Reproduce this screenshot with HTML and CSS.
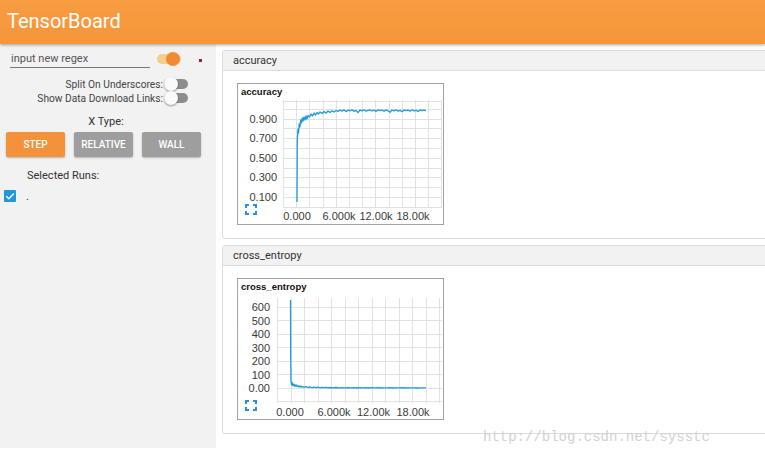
FILE: index.html
```html
<!DOCTYPE html>
<html>
<head>
<meta charset="utf-8">
<title>TensorBoard</title>
<link rel="stylesheet" href="styles.css">
</head>
<body>
<header class="topbar"><span class="brand">TensorBoard</span></header>
<div class="layout">
  <aside class="sidebar">
    <div class="regex-row">
      <div class="regex-input">input new regex</div>
      <div class="toggle on"><span class="track"></span><span class="knob"></span></div>
      <span class="dot"></span>
    </div>
    <div class="toggle-row first">
      <span class="toggle-label">Split On Underscores:</span>
      <div class="toggle off"><span class="track"></span><span class="knob"></span></div>
    </div>
    <div class="toggle-row">
      <span class="toggle-label">Show Data Download Links:</span>
      <div class="toggle off"><span class="track"></span><span class="knob"></span></div>
    </div>
    <div class="xtype">X Type:</div>
    <div class="xbuttons">
      <div class="xbtn active">STEP</div>
      <div class="xbtn">RELATIVE</div>
      <div class="xbtn">WALL</div>
    </div>
    <div class="runs-title">Selected Runs:</div>
    <div class="run-row">
      <span class="checkbox"><svg width="12" height="12" viewBox="0 0 12 12"><path d="M2.3 6.2 L4.9 8.7 L9.8 3.4" fill="none" stroke="#fff" stroke-width="1.4"/></svg></span>
      <span class="run-name">.</span>
    </div>
  </aside>
  <main class="main">
    <section class="card">
      <div class="card-head">accuracy</div>
      <div class="card-body">
        <div class="chart">
          <div class="chart-title">accuracy</div>
          <svg class="plot" width="205" height="125" viewBox="0 0 205 125">
            <g stroke="#e2e2e2" stroke-width="1" fill="none">
              <path d="M45.5 1V109 M58.5 1V109 M71.5 1V109 M85.5 1V109 M98.5 1V109 M111.5 1V109 M124.5 1V109 M137.5 1V109 M151.5 1V109 M164.5 1V109 M177.5 1V109 M190.5 1V109 M203.5 1V109"/>
              <path d="M45 108.5H204 M45 98.5H204 M45 88.5H204 M45 78.5H204 M45 69.5H204 M45 59.5H204 M45 49.5H204 M45 39.5H204 M45 29.5H204 M45 20.5H204 M45 10.5H204 M45 2.5H204"/>
            </g>
            <g class="axis" text-anchor="end">
              <text x="39" y="23.5">0.900</text>
              <text x="39" y="43">0.700</text>
              <text x="39" y="62.5">0.500</text>
              <text x="39" y="82">0.300</text>
              <text x="39" y="101.5">0.100</text>
            </g>
            <g class="axis" text-anchor="middle">
              <text x="59" y="121">0.000</text>
              <text x="101" y="121">6.000k</text>
              <text x="138" y="121">12.00k</text>
              <text x="175" y="121">18.00k</text>
            </g>
            <polyline class="series" points="59,103 59.3,40 60,30 60.6,34 61.2,25 62,28 62.7,21 63.5,24 64.2,19 65,22 66,18 67,21 68,17 69,20 70,16.5 71.5,18 73,15 74.5,17 76,14 77.5,16 79,13.5 80.5,15 82,13 84,14.5 86,12.5 88,14 90,12 92,13.5 94,11.8 96,13 98,11.5 100,12.4 102,11 104,12.2 106,10.8 108,12.6 110,11.2 112,11.8 114,10.7 116,12.3 118,11.4 120,13.6 122,11 124,11.9 126,10.7 128,12.2 130,11.3 132,10.9 134,12 136,11.1 138,12.5 140,10.8 142,11.7 144,11.1 146,12.3 148,10.9 150,11.8 152,13.2 154,11 156,11.9 158,10.8 160,12.1 162,11.3 164,12.7 166,10.9 168,11.6 170,11.1 172,12.2 174,10.8 176,11.9 178,11.3 180,12.4 182,10.9 184,11.6 186,11.2 188,11.8"/>
            <path class="fit" d="M8 109V106H11 M15 106H18V109 M18 112V115H15 M11 115H8V112"/>
          </svg>
        </div>
      </div>
    </section>
    <section class="card">
      <div class="card-head">cross_entropy</div>
      <div class="card-body">
        <div class="chart">
          <div class="chart-title">cross_entropy</div>
          <svg class="plot" width="205" height="125" viewBox="0 0 205 125">
            <g stroke="#e2e2e2" stroke-width="1" fill="none">
              <path d="M39.5 4V109 M53.5 4V109 M66.5 4V109 M80.5 4V109 M93.5 4V109 M107.5 4V109 M120.5 4V109 M134.5 4V109 M147.5 4V109 M161.5 4V109 M174.5 4V109 M188.5 4V109 M201.5 4V109"/>
              <path d="M39 13.5H204 M39 26.5H204 M39 40.5H204 M39 53.5H204 M39 67.5H204 M39 80.5H204 M39 94.5H204 M39 107.5H204"/>
            </g>
            <g class="axis" text-anchor="end">
              <text x="32" y="17">600</text>
              <text x="32" y="31">500</text>
              <text x="32" y="44">400</text>
              <text x="32" y="58">300</text>
              <text x="32" y="71">200</text>
              <text x="32" y="85">100</text>
              <text x="32" y="98">0.00</text>
            </g>
            <g class="axis" text-anchor="middle">
              <text x="52" y="122">0.000</text>
              <text x="96" y="122">6.000k</text>
              <text x="135.5" y="122">12.00k</text>
              <text x="175" y="122">18.00k</text>
            </g>
            <polyline class="series" points="52.5,6 52.7,60 53,87 53.5,91 54,88.5 55,91.8 56,90 57,92.4 58,90.8 59,92.6 60,91.6 61,93 62,92 63,93.1 64,92.4 66,93.3 68,92.7 70,93.5 72,93 74,93.6 76,93.1 78,93.7 80,93.2 82,93.8 84,93.3 86,93.7 88,93.4 90,93.9 92,93.5 95,93.8 98,93.5 101,93.9 104,93.6 107,93.9 110,93.6 113,93.9 116,93.7 119,94 122,93.6 125,93.9 128,93.7 131,94 134,93.7 137,93.9 140,93.7 143,94 146,93.8 149,93.9 152,93.7 155,94 158,93.8 161,93.9 164,93.7 167,94 170,93.8 173,93.9 176,93.8 179,94 182,93.8 185,93.9 188,93.8"/>
            <path class="fit" d="M8 110V107H11 M15 107H18V110 M18 113V116H15 M11 116H8V113"/>
          </svg>
        </div>
      </div>
    </section>
  </main>
</div>
<div class="watermark">http://blog.csdn.net/sysstc</div>
</body>
</html>
```

FILE: styles.css
```css
* {
  box-sizing: border-box;
}

body {
  margin: 0;
  background: #fff;
  font-family: Roboto, "Liberation Sans", sans-serif;
  color: #333;
  overflow: hidden;
}

.topbar {
  height: 44px;
  background: linear-gradient(#f89d42, #f6953a);
  display: flex;
  align-items: center;
  padding: 0 0 2px 7px;
  box-shadow: 0 1px 3px rgba(0, 0, 0, 0.35);
  position: relative;
  z-index: 1;
}

.brand {
  color: #fff;
  font-size: 20px;
}

.layout {
  display: flex;
  height: 404px;
}

.sidebar {
  width: 216px;
  flex: none;
  background: #f2f2f2;
  display: flex;
  flex-direction: column;
}

.regex-row {
  display: flex;
  align-items: center;
  height: 18px;
  margin-top: 6px;
  padding-left: 10px;
}

.regex-input {
  width: 140px;
  height: 17px;
  border-bottom: 1px solid #777;
  font-size: 11px;
  line-height: 16px;
  color: #555;
  padding-left: 1px;
}

.toggle {
  position: relative;
  width: 24px;
  height: 14px;
  flex: none;
}

.track {
  display: block;
  margin-top: 2px;
  height: 10px;
  border-radius: 5px;
}

.knob {
  position: absolute;
  top: 0;
  width: 14px;
  height: 14px;
  border-radius: 50%;
}

.regex-row .toggle {
  margin-left: 7px;
}

.toggle.on .track {
  background: #f5cd8c;
}

.toggle.on .knob {
  right: 1px;
  background: #f28a35;
}

.toggle.off .track {
  background: #8d8d8d;
}

.toggle.off .knob {
  left: 0;
  background: #fafafa;
  box-shadow: 0 1px 2px rgba(0, 0, 0, 0.4);
}

.dot {
  width: 3px;
  height: 3px;
  margin-left: 18px;
  margin-top: 3px;
  background: #9c1c3c;
}

.toggle-row {
  display: flex;
  justify-content: flex-end;
  align-items: center;
  height: 14px;
  padding-right: 28px;
  font-size: 10.2px;
  color: #444;
}

.toggle-row.first {
  margin-top: 9px;
}

.toggle-label {
  margin-right: 1px;
}

.xtype {
  margin-top: 10px;
  height: 14px;
  line-height: 14px;
  text-align: center;
  padding-right: 4px;
  font-size: 11px;
  color: #333;
}

.xbuttons {
  display: flex;
  gap: 9px;
  padding-left: 6px;
  margin-top: 3px;
}

.xbtn {
  width: 59px;
  height: 25px;
  display: flex;
  align-items: center;
  justify-content: center;
  background: #9e9e9e;
  color: #fff;
  font-size: 10px;
  font-weight: 500;
  border-radius: 2px;
  box-shadow: 0 1px 2px rgba(0, 0, 0, 0.25);
}

.xbtn.active {
  background: #f4913b;
}

.runs-title {
  margin-top: 12px;
  padding-left: 27px;
  height: 14px;
  line-height: 14px;
  font-size: 11px;
  color: #333;
}

.run-row {
  display: flex;
  align-items: center;
  margin-top: 7px;
  padding-left: 4px;
  height: 12px;
}

.checkbox {
  width: 12px;
  height: 12px;
  background: #1e96e0;
  border-radius: 1px;
  display: flex;
}

.run-name {
  margin-left: 10px;
  font-size: 11px;
  color: #333;
}

.main {
  flex: 1;
  min-width: 0;
  padding: 6px 0 0 6px;
  overflow: hidden;
  background: #fff;
}

.card {
  border: 1px solid #dcdcdc;
  border-radius: 3px;
  margin-right: -10px;
  margin-bottom: 6px;
}

.card-head {
  height: 20px;
  line-height: 19px;
  background: #f2f2f2;
  border-bottom: 1px solid #dcdcdc;
  padding-left: 10px;
  font-size: 11px;
  color: #333;
}

.card-body {
  padding: 12px 0 13px 14px;
}

.chart {
  width: 207px;
  height: 142px;
  border: 1px solid #a3a3a3;
  background: #fff;
}

.chart-title {
  height: 15px;
  line-height: 15px;
  padding-left: 3px;
  font-family: "Liberation Sans", Arial, sans-serif;
  font-size: 9.5px;
  font-weight: bold;
  color: #111;
}

.plot {
  display: block;
}

.axis {
  font-family: "Liberation Sans", Arial, sans-serif;
  font-size: 11px;
  fill: #3a3a3a;
}

.series {
  fill: none;
  stroke: #1f9bd7;
  stroke-width: 1.3;
  stroke-linejoin: round;
}

.fit {
  fill: none;
  stroke: #2a8fe0;
  stroke-width: 2;
}

.watermark {
  position: absolute;
  left: 483px;
  top: 429px;
  font-family: "Liberation Mono", monospace;
  font-size: 14px;
  color: #d2d2d2;
  letter-spacing: 0;
}
```
